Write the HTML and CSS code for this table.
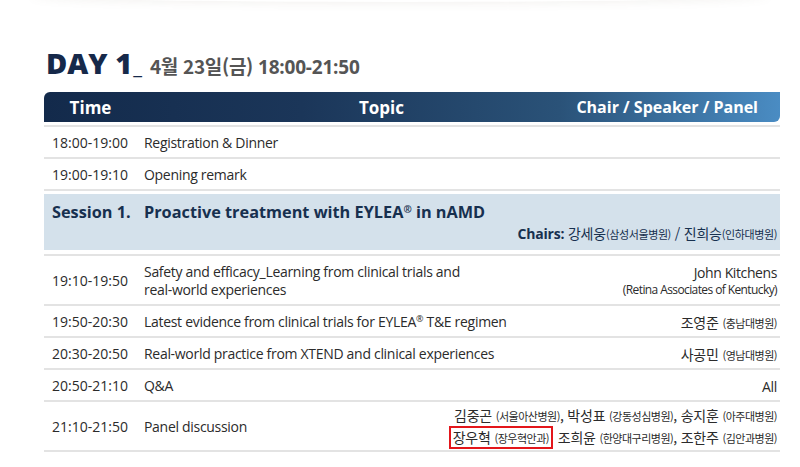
FILE: index.html
```html
<!DOCTYPE html>
<html lang="ko">
<head>
<meta charset="utf-8">
<link rel="stylesheet" href="styles.css">
</head>
<body>
<div class="topshade"></div>
<main class="page">
  <h1 class="day"><span class="day-main">DAY 1</span><span class="day-us">_</span><span class="day-date">4월 23일(금) <span class="day-time">18:00-21:50</span></span></h1>

  <div class="thead">
    <div class="th th-time">Time</div>
    <div class="th th-topic">Topic</div>
    <div class="th th-chair">Chair / Speaker / Panel</div>
  </div>

  <div class="row first">
    <div class="time">18:00-19:00</div>
    <div class="topic">Registration &amp; Dinner</div>
    <div class="who"></div>
  </div>
  <div class="row">
    <div class="time">19:00-19:10</div>
    <div class="topic">Opening remark</div>
    <div class="who"></div>
  </div>

  <div class="session">
    <div class="session-in">
      <div class="session-top">
        <span class="s-label">Session 1.</span>
        <span class="s-title">Proactive treatment with EYLEA<sup>®</sup> in nAMD</span>
      </div>
      <div class="chairs"><b>Chairs:</b> 강세웅<small>(삼성서울병원)</small> / 진희승<small>(인하대병원)</small></div>
    </div>
  </div>

  <div class="row tall">
    <div class="time">19:10-19:50</div>
    <div class="topic">Safety and efficacy_Learning from clinical trials and<br>real-world experiences</div>
    <div class="who"><span class="en-name">John Kitchens</span><span class="en-aff">(Retina Associates of Kentucky)</span></div>
  </div>
  <div class="row">
    <div class="time">19:50-20:30</div>
    <div class="topic">Latest evidence from clinical trials for EYLEA<sup>®</sup> T&amp;E regimen</div>
    <div class="who">조영준 <small>(충남대병원)</small></div>
  </div>
  <div class="row">
    <div class="time">20:30-20:50</div>
    <div class="topic">Real-world practice from XTEND and clinical experiences</div>
    <div class="who">사공민 <small>(영남대병원)</small></div>
  </div>
  <div class="row">
    <div class="time">20:50-21:10</div>
    <div class="topic">Q&amp;A</div>
    <div class="who"><span class="en-all">All</span></div>
  </div>
  <div class="row tall">
    <div class="time">21:10-21:50</div>
    <div class="topic">Panel discussion</div>
    <div class="who panel">
      <span>김중곤 <small>(서울아산병원)</small>, 박성표 <small>(강동성심병원)</small>, 송지훈 <small>(아주대병원)</small></span>
      <span><span class="boxed">장우혁 <small>(장우혁안과)</small></span> 조희윤 <small>(한양대구리병원)</small>, 조한주 <small>(김안과병원)</small></span>
    </div>
  </div>
</main>
</body>
</html>
```

FILE: styles.css
```css
* { box-sizing: border-box; }
html, body { margin: 0; padding: 0; background: #fff; }
body {
  font-family: "Open Sans", "Noto Sans CJK KR", sans-serif;
  color: #2b2b2b;
  width: 800px;
  height: 467px;
  overflow: hidden;
  position: relative;
}
.topshade {
  position: absolute;
  left: 30px;
  right: 30px;
  top: -12px;
  height: 14px;
  border-radius: 50%;
  box-shadow: 0 2px 9px rgba(130, 120, 100, 0.09);
}
.page {
  padding: 44px 20px 0 44px;
}
.day {
  margin: 0 0 10px 2px;
  display: flex;
  align-items: baseline;
  height: 38px;
  line-height: 38px;
}
.day-main {
  font-family: "Open Sans", sans-serif;
  font-weight: 800;
  font-size: 29px;
  color: #16294a;
  letter-spacing: 0;
}
.day-us {
  font-family: "Open Sans", sans-serif;
  font-weight: 400;
  font-size: 20px;
  color: #16294a;
  margin: 0 8px 0 1px;
}
.day-date {
  font-family: "Noto Sans CJK KR", sans-serif;
  font-weight: 700;
  font-size: 19px;
  color: #555;
  letter-spacing: -0.3px;
}
.day-time {
  font-family: "Open Sans", sans-serif;
  font-size: 19px;
  letter-spacing: -0.2px;
}

.thead {
  display: flex;
  align-items: center;
  height: 30px;
  border-radius: 6px 0 6px 0;
  background: linear-gradient(to right, #132a4b 0%, #1b3659 35%, #2a5278 70%, #4a8cc3 100%);
  color: #fff;
  font-weight: 700;
  font-size: 16px;
  margin-bottom: 3px;
}
.th-time { width: 92px; flex: none; text-align: center; font-size: 17px; padding-left: 1px; }
.th-topic { flex: 1; text-align: center; padding-left: 51px; font-size: 17px; }
.th-chair { flex: none; width: 204px; text-align: right; padding-right: 22px; white-space: nowrap; }

.row {
  display: flex;
  align-items: center;
  height: 32px;
  border-bottom: 2px solid #e3e3e3;
  font-size: 14px;
  padding-top: 1px;
}
.row.first { border-top: 2px solid #e3e3e3; height: 34px; }
.row.tall { height: 50px; }
.time { width: 100px; padding-left: 8px; flex: none; }
.topic { flex: 1; line-height: 18px; letter-spacing: -0.3px; }
.who {
  text-align: right;
  padding-right: 3px;
  font-family: "Noto Sans CJK KR", sans-serif;
  font-size: 14px;
  white-space: nowrap;
  letter-spacing: -0.2px;
}
.who small { font-size: 11px; letter-spacing: -0.5px; }
sup { font-size: 9px; line-height: 0; vertical-align: 5px; }
.en-all { font-family: "Open Sans", sans-serif; letter-spacing: -0.3px; }

.en-name { display: block; font-family: "Open Sans", sans-serif; font-size: 14px; line-height: 18px; letter-spacing: -0.4px; }
.en-aff { display: block; font-family: "Open Sans", sans-serif; font-size: 12px; line-height: 16px; letter-spacing: -0.6px; }

.session {
  padding: 3px 0 4px;
  border-bottom: 2px solid #e3e3e3;
}
.session-in {
  background: #d4e1eb;
  height: 56px;
  padding: 8px 3px 0 8px;
  color: #17304f;
}
.session-top {
  display: flex;
  font-weight: 700;
  font-size: 16.3px;
  line-height: 20px;
}
.s-label { width: 92px; }
.s-title sup { font-size: 10px; }
.chairs {
  text-align: right;
  font-family: "Noto Sans CJK KR", sans-serif;
  font-size: 14px;
  line-height: 20px;
  margin-top: 1px;
  letter-spacing: -0.2px;
}
.chairs b { font-family: "Open Sans", sans-serif; font-weight: 700; }
.chairs small { font-size: 11px; letter-spacing: -0.4px; }

.panel { display: flex; flex-direction: column; align-items: flex-end; line-height: 20px; }
.boxed {
  border: 2px solid #e3161b;
  padding: 0 2px;
  margin-right: 1px;
  display: inline-block;
  line-height: 18px;
}
```
